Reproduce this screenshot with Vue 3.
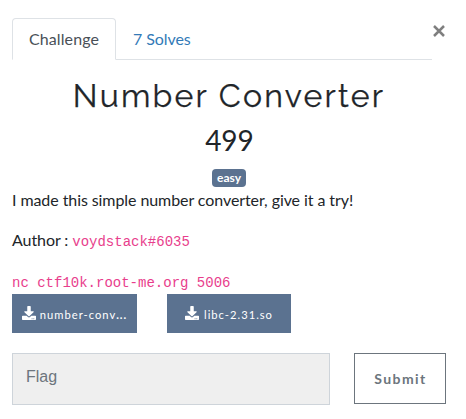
<script setup>
const files = [
  { name: 'number-conv', more: '...' },
  { name: 'libc-2.31.so', more: '' },
]
</script>

<template>
  <main class="modal">
    <header class="top">
      <nav class="tabs">
        <a class="tab active">Challenge</a>
        <a class="tab">7 Solves</a>
      </nav>
      <button class="close" aria-label="Close">
        <svg viewBox="0 0 12 12" width="12" height="12"><path d="M1 1 11 11M11 1 1 11" /></svg>
      </button>
    </header>
    <h2 class="name">Number Converter</h2>
    <h3 class="value">499</h3>
    <div class="tags"><span class="badge">easy</span></div>
    <div class="desc">
      <p>I made this simple number converter, give it a try!</p>
      <p>Author : <code>voydstack#6035</code></p>
      <p><code>nc ctf10k.root-me.org 5006</code></p>
    </div>
    <div class="files">
      <a v-for="file in files" :key="file.name" class="file">
        <svg class="icon" viewBox="0 0 512 512" width="14" height="14"><path d="M216 0h80c13.300 0 24 10.700 24 24v168h87.700c17.800 0 26.700 21.500 14.100 34.100L269.700 378.300c-7.500 7.500-19.800 7.500-27.300 0L90.100 226.100c-12.600-12.600-3.700-34.100 14.100-34.100H192V24c0-13.300 10.700-24 24-24zm296 376v112c0 13.300-10.700 24-24 24H24c-13.300 0-24-10.700-24-24V376c0-13.300 10.700-24 24-24h146.700l49 49c20.100 20.100 52.500 20.100 72.600 0l49-49H488c13.300 0 24 10.700 24 24zm-124 88c0-11-9-20-20-20s-20 9-20 20 9 20 20 20 20-9 20-20zm64 0c0-11-9-20-20-20s-20 9-20 20 9 20 20 20 20-9 20-20z" /></svg>
        <span>{{ file.name }}<b v-if="file.more">{{ file.more }}</b></span>
      </a>
    </div>
    <form class="answer" @submit.prevent>
      <input class="flag" type="text" placeholder="Flag" />
      <button class="submit" type="submit">Submit</button>
    </form>
  </main>
</template>

<style>
body {
  background: #fff;
}
</style>

<style scoped>
* {
  box-sizing: border-box;
}
.modal {
  height: 419px;
  padding: 18px 20px 0 12px;
  overflow: hidden;
  color: #212529;
  font: 16px/24px Lato, sans-serif;
}
.top {
  display: flex;
  height: 42px;
}
.tabs {
  display: flex;
  flex: 0 0 420px;
  border-bottom: 1px solid #dee2e6;
}
.tab {
  height: 42px;
  padding: 8px 16px;
  border: 1px solid transparent;
  border-radius: 4px 4px 0 0;
  color: #337ab7;
  letter-spacing: -0.08px;
}
.active {
  width: 104px;
  border-color: #dee2e6 #dee2e6 #fff;
  background: #fff;
  color: #495057;
  letter-spacing: 0.1px;
}
.close {
  flex: none;
  width: 14px;
  height: 14px;
  margin-top: 6px;
  padding: 1px;
  border: 0;
  background: none;
}
.close svg {
  display: block;
  fill: none;
  stroke: #7f7f7f;
  stroke-width: 2.5;
}
.name {
  width: 434px;
  margin: 17px 0 0;
  font: 400 32px/38px Raleway, Lato, sans-serif;
  letter-spacing: 2.25px;
  text-align: center;
  -webkit-text-stroke: 0.25px currentColor;
}
.value {
  width: 435px;
  margin: 8px 0 0;
  font-size: 28px;
  font-weight: 400;
  line-height: 34px;
  text-align: center;
}
.tags {
  display: flex;
  justify-content: center;
  width: 434px;
  margin-top: 12px;
}
.badge {
  height: 18px;
  padding: 3px 5px;
  border-radius: 4px;
  background: #5b7290;
  color: #fff;
  font-size: 12px;
  font-weight: 700;
  line-height: 12px;
}
.desc {
  display: flex;
  flex-direction: column;
  gap: 16px;
  margin-top: 1px;
  letter-spacing: -0.08px;
}
.desc p {
  height: 24px;
  margin: 0;
  white-space: nowrap;
}
.desc p:last-child {
  margin-top: 1px;
}
code {
  color: #e83e8c;
  font: 14px "Liberation Mono", monospace;
  letter-spacing: 0;
}
.files {
  display: flex;
  gap: 30px;
  margin-top: 1px;
}
.file {
  display: flex;
  align-items: center;
  justify-content: center;
  gap: 4px;
  width: 125px;
  height: 39px;
  padding-bottom: 1px;
  background: #5b7290;
  color: #fff;
  font-size: 11.200px;
  line-height: 22px;
  letter-spacing: 1px;
}
.file span {
  padding-top: 3px;
}
.file:last-child {
  width: 124px;
  gap: 5px;
}
.icon {
  fill: #fff;
}
.answer {
  display: flex;
  gap: 24px;
  width: 434px;
  margin-top: 20px;
}
.flag {
  width: 318px;
  height: 52px;
  padding: 10px 13px 14px;
  border: 1px solid #ced4da;
  border-radius: 0;
  outline: 0;
  background: #efefef;
  font: 16px "Liberation Sans", sans-serif;
}
.flag::placeholder {
  color: #6c757d;
  opacity: 1;
}
.submit {
  width: 92px;
  height: 51px;
  padding: 0 0 0 1px;
  border: 1px solid #6c757d;
  background: #fff;
  color: #6c757d;
  font: 700 14px Lato, sans-serif;
  letter-spacing: 1.400px;
}
</style>
